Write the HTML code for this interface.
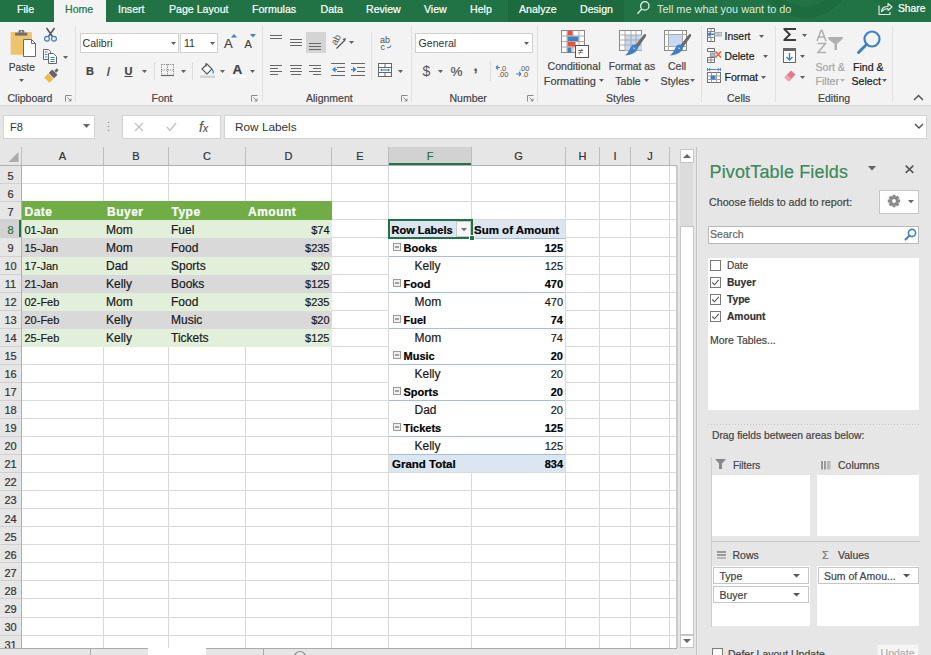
<!DOCTYPE html><html><head><meta charset="utf-8"><style>
html,body{margin:0;padding:0;}
body{width:931px;height:655px;overflow:hidden;position:relative;background:#e6e6e6;font-family:"Liberation Sans", sans-serif;}
.t{position:absolute;white-space:nowrap;-webkit-text-stroke:0.2px currentColor;}
.r{position:absolute;box-sizing:border-box;}
svg.r{overflow:visible;}
</style></head><body>
<div class="r" style="left:0px;top:0px;width:931px;height:22px;background:#217346;"></div>
<div class="r" style="left:508px;top:0px;width:116px;height:22px;background:#1c6a3e;"></div>
<svg class="r" style="left:700px;top:0px;" width="231" height="22" viewBox="0 0 231 22"><circle cx="105" cy="-30" r="42" fill="none" stroke="#1b663b" stroke-width="12" opacity="0.55"/><circle cx="200" cy="-40" r="45" fill="none" stroke="#1b663b" stroke-width="6" opacity="0.4"/></svg>
<div class="r" style="left:54px;top:0px;width:52px;height:23px;background:#f3f3f3;"></div>
<div class="t" style="left:17px;top:4.03px;font-size:10.6px;line-height:10.6px;color:#ffffff;font-weight:normal;">File</div>
<div class="t" style="left:65px;top:4.03px;font-size:10.6px;line-height:10.6px;color:#217346;font-weight:normal;">Home</div>
<div class="t" style="left:118px;top:4.03px;font-size:10.6px;line-height:10.6px;color:#ffffff;font-weight:normal;">Insert</div>
<div class="t" style="left:169px;top:4.03px;font-size:10.6px;line-height:10.6px;color:#ffffff;font-weight:normal;">Page Layout</div>
<div class="t" style="left:252px;top:4.03px;font-size:10.6px;line-height:10.6px;color:#ffffff;font-weight:normal;">Formulas</div>
<div class="t" style="left:320.5px;top:4.03px;font-size:10.6px;line-height:10.6px;color:#ffffff;font-weight:normal;">Data</div>
<div class="t" style="left:366px;top:4.03px;font-size:10.6px;line-height:10.6px;color:#ffffff;font-weight:normal;">Review</div>
<div class="t" style="left:424px;top:4.03px;font-size:10.6px;line-height:10.6px;color:#ffffff;font-weight:normal;">View</div>
<div class="t" style="left:470px;top:4.03px;font-size:10.6px;line-height:10.6px;color:#ffffff;font-weight:normal;">Help</div>
<div class="t" style="left:519px;top:4.03px;font-size:10.6px;line-height:10.6px;color:#ffffff;font-weight:normal;">Analyze</div>
<div class="t" style="left:580px;top:4.03px;font-size:10.6px;line-height:10.6px;color:#ffffff;font-weight:normal;">Design</div>
<div class="t" style="left:657px;top:3.77px;font-size:10.9px;line-height:10.9px;color:#dbe9df;font-weight:normal;-webkit-text-stroke:0;">Tell me what you want to do</div>
<div class="t" style="left:898px;top:4.28px;font-size:10.3px;line-height:10.3px;color:#ffffff;font-weight:normal;">Share</div>
<svg class="r" style="left:636px;top:0px;" width="16" height="16" viewBox="0 0 16 16"><circle cx="8.8" cy="5.9" r="4.2" fill="none" stroke="#e8f0ea" stroke-width="1.3"/><line x1="5.8" y1="8.9" x2="1.5" y2="13.8" stroke="#e8f0ea" stroke-width="1.4"/></svg>
<svg class="r" style="left:877.5px;top:2px;" width="16" height="15" viewBox="0 0 16 15"><path d="M1 3.5 V12.5 H12 V10" fill="none" stroke="#e8f0ea" stroke-width="1.1"/><path d="M3.5 9.5 C3.5 5.5 7 4.5 10 4.5 V1.5 L14 5 L10 8.5 V6.5 C7 6.5 5.5 7.5 3.5 9.5Z" fill="none" stroke="#e8f0ea" stroke-width="1.1" stroke-linejoin="round"/></svg>
<div class="r" style="left:0px;top:22px;width:931px;height:83px;background:#f3f3f3;"></div>
<div class="r" style="left:0px;top:105px;width:931px;height:1px;background:#d8d8d8;"></div>
<div class="r" style="left:75px;top:26px;width:1px;height:76px;background:#e1e1e1;"></div>
<div class="r" style="left:262px;top:26px;width:1px;height:76px;background:#e1e1e1;"></div>
<div class="r" style="left:411px;top:26px;width:1px;height:76px;background:#e1e1e1;"></div>
<div class="r" style="left:537px;top:26px;width:1px;height:76px;background:#e1e1e1;"></div>
<div class="r" style="left:701px;top:26px;width:1px;height:76px;background:#e1e1e1;"></div>
<div class="r" style="left:775px;top:26px;width:1px;height:76px;background:#e1e1e1;"></div>
<div class="r" style="left:892px;top:26px;width:1px;height:76px;background:#e1e1e1;"></div>
<div class="t" style="left:7.5px;top:93.11px;font-size:10.5px;line-height:10.5px;color:#444444;font-weight:normal;">Clipboard</div>
<div class="t" style="left:12px;width:300px;text-align:center;top:93.11px;font-size:10.5px;line-height:10.5px;color:#444444;font-weight:normal;">Font</div>
<div class="t" style="left:306px;top:93.11px;font-size:10.5px;line-height:10.5px;color:#444444;font-weight:normal;">Alignment</div>
<div class="t" style="left:449.5px;top:93.11px;font-size:10.5px;line-height:10.5px;color:#444444;font-weight:normal;">Number</div>
<div class="t" style="left:606px;top:93.11px;font-size:10.5px;line-height:10.5px;color:#444444;font-weight:normal;">Styles</div>
<div class="t" style="left:727px;top:93.11px;font-size:10.5px;line-height:10.5px;color:#444444;font-weight:normal;">Cells</div>
<div class="t" style="left:818px;top:93.11px;font-size:10.5px;line-height:10.5px;color:#444444;font-weight:normal;">Editing</div>
<svg class="r" style="left:65px;top:95px;" width="7" height="7" viewBox="0 0 7 7"><path d="M0.5 6.5 V0.5 H6.5" fill="none" stroke="#8a8a8a" stroke-width="1"/><path d="M2.5 2.5 L6 6 M6 3.5 V6 H3.5" fill="none" stroke="#8a8a8a" stroke-width="1"/></svg>
<svg class="r" style="left:251px;top:95px;" width="7" height="7" viewBox="0 0 7 7"><path d="M0.5 6.5 V0.5 H6.5" fill="none" stroke="#8a8a8a" stroke-width="1"/><path d="M2.5 2.5 L6 6 M6 3.5 V6 H3.5" fill="none" stroke="#8a8a8a" stroke-width="1"/></svg>
<svg class="r" style="left:401px;top:95px;" width="7" height="7" viewBox="0 0 7 7"><path d="M0.5 6.5 V0.5 H6.5" fill="none" stroke="#8a8a8a" stroke-width="1"/><path d="M2.5 2.5 L6 6 M6 3.5 V6 H3.5" fill="none" stroke="#8a8a8a" stroke-width="1"/></svg>
<svg class="r" style="left:527px;top:95px;" width="7" height="7" viewBox="0 0 7 7"><path d="M0.5 6.5 V0.5 H6.5" fill="none" stroke="#8a8a8a" stroke-width="1"/><path d="M2.5 2.5 L6 6 M6 3.5 V6 H3.5" fill="none" stroke="#8a8a8a" stroke-width="1"/></svg>
<svg class="r" style="left:913px;top:94px;" width="11" height="7" viewBox="0 0 11 7"><path d="M1 6 L5.5 1.5 L10 6" fill="none" stroke="#555" stroke-width="1.5"/></svg>
<svg class="r" style="left:9px;top:29px;" width="28" height="29" viewBox="0 0 28 29">
<rect x="1.6" y="3" width="21.3" height="22.7" rx="1.2" fill="#efc26c"/>
<rect x="6.1" y="3.7" width="12.2" height="2.9" fill="#6f6f6f"/>
<path d="M9.6 3.8 V2.2 Q9.6 1 10.8 1 H14 Q15.2 1 15.2 2.2 V3.8Z" fill="#6f6f6f"/>
<circle cx="12.4" cy="2.6" r="0.8" fill="#efefef"/>
<path d="M14.5 10.5 H22.5 L26.5 14.5 V27.5 H14.5Z" fill="#fff" stroke="#6a6a6a" stroke-width="1"/>
<path d="M22.5 10.5 V14.5 H26.5" fill="none" stroke="#6a6a6a" stroke-width="1"/></svg>
<div class="t" style="left:8.8px;top:62.67px;font-size:10.2px;line-height:10.2px;color:#444444;font-weight:normal;">Paste</div>
<svg class="r" style="left:18.5px;top:79.0px;" width="5" height="3" viewBox="0 0 5 3"><path d="M0 0 H5 L2.5 3Z" fill="#606060"/></svg>
<svg class="r" style="left:44px;top:27px;" width="13" height="15" viewBox="0 0 13 15"><path d="M2.5 1 L8.5 9.5 M10.5 1 L4.5 9.5" stroke="#555" stroke-width="1.5" fill="none"/><circle cx="3" cy="11.7" r="2.4" fill="none" stroke="#3f7fc4" stroke-width="1.2"/><circle cx="10" cy="11.7" r="2.4" fill="none" stroke="#3f7fc4" stroke-width="1.2"/></svg>
<svg class="r" style="left:43px;top:49px;" width="15" height="15" viewBox="0 0 15 15"><path d="M0.5 0.5 H5.5 L7.5 2.5 V10.5 H0.5Z" fill="#fff" stroke="#666" stroke-width="1"/><path d="M5.5 4.5 H10.5 L13.5 7.5 V14.5 H5.5Z" fill="#fff" stroke="#666" stroke-width="1"/><path d="M2 3 H4.5 M2 5.5 H4.5 M2 8 H4.5 M7.5 8.5 H11.5 M7.5 10.5 H11.5 M7.5 12.5 H11.5" stroke="#3f7fc4" stroke-width="1"/></svg>
<svg class="r" style="left:62.5px;top:55.5px;" width="5" height="3" viewBox="0 0 5 3"><path d="M0 0 H5 L2.5 3Z" fill="#606060"/></svg>
<svg class="r" style="left:41.5px;top:67px;" width="18" height="18" viewBox="0 0 18 18"><g transform="rotate(45 9 9)"><rect x="7.6" y="-0.5" width="2.8" height="3.5" rx="0.8" fill="#666"/><rect x="5.2" y="3.6" width="7.6" height="5" rx="0.8" fill="#666"/><path d="M5.2 9.2 H12.8 V14.5 L11.5 15.5 L10.3 14.5 L9 15.5 L7.7 14.5 L6.5 15.5 L5.2 14.5Z" fill="#f0b94e"/></g></svg>
<div class="r" style="left:80px;top:33px;width:99px;height:20px;background:#fff;border:1px solid #d0d0d0"></div>
<div class="r" style="left:180px;top:33px;width:38px;height:20px;background:#fff;border:1px solid #d0d0d0"></div>
<div class="t" style="left:82.5px;top:38.03px;font-size:10.6px;line-height:10.6px;color:#333;font-weight:normal;-webkit-text-stroke:0;">Calibri</div>
<div class="t" style="left:184px;top:38.03px;font-size:10.6px;line-height:10.6px;color:#333;font-weight:normal;-webkit-text-stroke:0;">11</div>
<svg class="r" style="left:170.5px;top:42.0px;" width="5" height="3" viewBox="0 0 5 3"><path d="M0 0 H5 L2.5 3Z" fill="#606060"/></svg>
<svg class="r" style="left:209.5px;top:42.0px;" width="5" height="3" viewBox="0 0 5 3"><path d="M0 0 H5 L2.5 3Z" fill="#606060"/></svg>
<div class="t" style="left:224px;top:37.00px;font-size:13px;line-height:13px;color:#444;font-weight:normal;">A</div>
<svg class="r" style="left:231px;top:34px;" width="6" height="4" viewBox="0 0 6 4"><path d="M0 3.5 L3 0 L6 3.5Z" fill="#3f7fc4"/></svg>
<div class="t" style="left:244.5px;top:38.69px;font-size:11px;line-height:11px;color:#444;font-weight:normal;">A</div>
<svg class="r" style="left:250px;top:34px;" width="6" height="4" viewBox="0 0 6 4"><path d="M0 0 H6 L3 3.5Z" fill="#3f7fc4"/></svg>
<div class="t" style="left:86px;top:65.69px;font-size:11px;line-height:11px;color:#444;font-weight:bold;">B</div>
<div class="t" style="left:106.5px;top:64.50px;font-size:13px;line-height:13px;color:#444;font-weight:normal;font-family:"Liberation Serif",serif;"><i>I</i></div>
<div class="t" style="left:124.5px;top:65.69px;font-size:11px;line-height:11px;color:#444;font-weight:bold;text-decoration:underline;">U</div>
<svg class="r" style="left:141.5px;top:69.5px;" width="5" height="3" viewBox="0 0 5 3"><path d="M0 0 H5 L2.5 3Z" fill="#606060"/></svg>
<div class="r" style="left:154px;top:62px;width:1px;height:18px;background:#dcdcdc;"></div>
<svg class="r" style="left:161px;top:64px;" width="13" height="13" viewBox="0 0 13 13"><path d="M0.5 0.5 H12.5 M0.5 6 H12.5 M0.5 0.5 V11 M6.5 0.5 V11 M12.5 0.5 V11" fill="none" stroke="#777" stroke-dasharray="1 1.2"/><path d="M0 11.5 H13" stroke="#666" stroke-width="1.2"/></svg>
<svg class="r" style="left:180.5px;top:69.5px;" width="5" height="3" viewBox="0 0 5 3"><path d="M0 0 H5 L2.5 3Z" fill="#606060"/></svg>
<div class="r" style="left:192px;top:62px;width:1px;height:18px;background:#dcdcdc;"></div>
<svg class="r" style="left:200px;top:62px;" width="16" height="16" viewBox="0 0 16 16"><path d="M2 7 L7 2 L12 7 L7 12Z" fill="#fff" stroke="#555" stroke-width="1.1"/><path d="M6 1 V5" stroke="#555" stroke-width="1"/><path d="M12 7 Q14.5 10 13 11.5" fill="#3f7fc4" stroke="#3f7fc4"/><rect x="0" y="13.5" width="15" height="2.5" fill="#d4d4d4"/></svg>
<svg class="r" style="left:219.5px;top:69.5px;" width="5" height="3" viewBox="0 0 5 3"><path d="M0 0 H5 L2.5 3Z" fill="#606060"/></svg>
<div class="t" style="left:232.5px;top:63.07px;font-size:13.5px;line-height:13.5px;color:#444;font-weight:bold;">A</div>
<div class="r" style="left:230px;top:75px;width:16px;height:3px;background:#fafafa;"></div>
<svg class="r" style="left:249.5px;top:69.5px;" width="5" height="3" viewBox="0 0 5 3"><path d="M0 0 H5 L2.5 3Z" fill="#606060"/></svg>
<svg class="r" style="left:270px;top:34.5px;" width="14" height="7" viewBox="0 0 14 7"><rect x="0" y="0" width="12" height="1" fill="#666"/><rect x="0" y="3" width="12" height="1" fill="#666"/></svg>
<svg class="r" style="left:290px;top:38.5px;" width="14" height="10" viewBox="0 0 14 10"><rect x="0" y="0" width="12" height="1" fill="#666"/><rect x="0" y="3" width="12" height="1" fill="#666"/><rect x="0" y="6" width="12" height="1" fill="#666"/></svg>
<div class="r" style="left:306px;top:32px;width:20px;height:21px;background:#d4d4d4;"></div>
<svg class="r" style="left:309px;top:43px;" width="14" height="10" viewBox="0 0 14 10"><rect x="0" y="0" width="12" height="1" fill="#666"/><rect x="0" y="3" width="12" height="1" fill="#666"/><rect x="0" y="6" width="12" height="1" fill="#666"/></svg>
<svg class="r" style="left:331px;top:34px;" width="16" height="16" viewBox="0 0 16 16"><text x="0" y="9" font-size="9.5" font-family="Liberation Sans" fill="#555" transform="rotate(-62 5 6)">ab</text><path d="M5.5 14.5 L13.5 6.5" stroke="#555" stroke-width="1.2"/><path d="M11.5 5 L15 4 L14 7.5Z" fill="#555"/></svg>
<svg class="r" style="left:348.5px;top:40.5px;" width="5" height="3" viewBox="0 0 5 3"><path d="M0 0 H5 L2.5 3Z" fill="#606060"/></svg>
<div class="r" style="left:371px;top:32px;width:1px;height:48px;background:#dcdcdc;"></div>
<svg class="r" style="left:380px;top:35px;" width="14" height="15" viewBox="0 0 14 15"><text x="0" y="7.5" font-size="9" font-family="Liberation Sans" fill="#505050">ab</text><text x="0.5" y="14.5" font-size="9" font-family="Liberation Sans" fill="#505050">c</text><path d="M7 12.5 Q9.5 13.5 11 10.5" fill="none" stroke="#3f7fc4" stroke-width="1.2"/></svg>
<svg class="r" style="left:270px;top:65px;" width="14" height="13" viewBox="0 0 14 13"><rect x="0" y="0" width="12" height="1" fill="#666"/><rect x="0" y="3" width="8" height="1" fill="#666"/><rect x="0" y="6" width="12" height="1" fill="#666"/><rect x="0" y="9" width="8" height="1" fill="#666"/></svg>
<svg class="r" style="left:290px;top:65px;" width="14" height="13" viewBox="0 0 14 13"><rect x="0" y="0" width="12" height="1" fill="#666"/><rect x="1" y="3" width="10" height="1" fill="#666"/><rect x="0" y="6" width="12" height="1" fill="#666"/><rect x="1" y="9" width="10" height="1" fill="#666"/></svg>
<svg class="r" style="left:309px;top:65px;" width="14" height="13" viewBox="0 0 14 13"><rect x="0" y="0" width="12" height="1" fill="#666"/><rect x="4" y="3" width="8" height="1" fill="#666"/><rect x="0" y="6" width="12" height="1" fill="#666"/><rect x="4" y="9" width="8" height="1" fill="#666"/></svg>
<svg class="r" style="left:331px;top:63px;" width="15" height="13" viewBox="0 0 15 13"><rect x="0" y="0" width="14" height="1" fill="#666"/><rect x="6" y="4" width="8" height="1" fill="#666"/><rect x="6" y="8" width="8" height="1" fill="#666"/><rect x="0" y="12" width="14" height="1" fill="#666"/><path d="M1 6.5 L4.5 3.5 V9.5Z" fill="#3f7fc4"/><rect x="3" y="6" width="3" height="1.2" fill="#3f7fc4"/></svg>
<svg class="r" style="left:351px;top:63px;" width="15" height="13" viewBox="0 0 15 13"><rect x="0" y="0" width="14" height="1" fill="#666"/><rect x="6" y="4" width="8" height="1" fill="#666"/><rect x="6" y="8" width="8" height="1" fill="#666"/><rect x="0" y="12" width="14" height="1" fill="#666"/><path d="M5.5 6.5 L2 3.5 V9.5Z" fill="#3f7fc4"/><rect x="0" y="6" width="3" height="1.2" fill="#3f7fc4"/></svg>
<svg class="r" style="left:378px;top:63px;" width="15" height="14" viewBox="0 0 15 14"><rect x="0.5" y="0.5" width="13" height="13" fill="#fff" stroke="#666"/><path d="M0.5 4.5 H13.5 M0.5 9.5 H13.5 M7 0.5 V4.5 M7 9.5 V13.5" stroke="#666"/><path d="M3 7 H11" stroke="#3f7fc4" stroke-width="1.2"/><path d="M2 7 L4 5.5 V8.5Z M12 7 L10 5.5 V8.5Z" fill="#3f7fc4"/></svg>
<svg class="r" style="left:398.0px;top:69.5px;" width="5" height="3" viewBox="0 0 5 3"><path d="M0 0 H5 L2.5 3Z" fill="#606060"/></svg>
<div class="r" style="left:415px;top:33px;width:118px;height:20px;background:#fff;border:1px solid #d0d0d0"></div>
<div class="t" style="left:418.5px;top:38.03px;font-size:10.6px;line-height:10.6px;color:#333;font-weight:normal;-webkit-text-stroke:0;">General</div>
<svg class="r" style="left:524.0px;top:42.0px;" width="5" height="3" viewBox="0 0 5 3"><path d="M0 0 H5 L2.5 3Z" fill="#606060"/></svg>
<div class="t" style="left:422.5px;top:63.65px;font-size:14px;line-height:14px;color:#555;font-weight:normal;-webkit-text-stroke:0;">$</div>
<svg class="r" style="left:438.0px;top:69.5px;" width="5" height="3" viewBox="0 0 5 3"><path d="M0 0 H5 L2.5 3Z" fill="#606060"/></svg>
<div class="t" style="left:450.5px;top:64.57px;font-size:13.5px;line-height:13.5px;color:#555;font-weight:normal;">%</div>
<div class="t" style="left:473.5px;top:57.80px;font-size:15px;line-height:15px;color:#555;font-weight:normal;"><b>,</b></div>
<div class="r" style="left:490px;top:61px;width:1px;height:20px;background:#dcdcdc;"></div>
<svg class="r" style="left:495px;top:64px;" width="16" height="14" viewBox="0 0 16 14"><text x="5" y="6.5" font-size="7.5" font-family="Liberation Sans" fill="#555">.0</text><text x="3" y="13" font-size="7.5" font-family="Liberation Sans" fill="#555">.00</text><path d="M1 3.5 H5 M1 3.5 L3 1.5 M1 3.5 L3 5.5" stroke="#3f7fc4" stroke-width="1.1" fill="none"/></svg>
<svg class="r" style="left:515px;top:64px;" width="16" height="14" viewBox="0 0 16 14"><text x="4" y="6.5" font-size="7.5" font-family="Liberation Sans" fill="#555">.00</text><text x="7" y="13" font-size="7.5" font-family="Liberation Sans" fill="#555">.0</text><path d="M1 10 H6 M6 10 L4 8 M6 10 L4 12" stroke="#3f7fc4" stroke-width="1.1" fill="none"/></svg>
<svg class="r" style="left:561px;top:30px;" width="29" height="28" viewBox="0 0 29 28">
<rect x="0.5" y="0.5" width="23" height="22" fill="#fff" stroke="#888"/>
<path d="M0.5 6 H23.5 M0.5 11.5 H23.5 M0.5 17 H23.5 M6 0.5 V22.5 M12 0.5 V22.5 M18 0.5 V22.5" stroke="#aaa"/>
<rect x="6.5" y="1" width="5" height="4.5" fill="#e5533d"/>
<rect x="6.5" y="6.5" width="11" height="4.5" fill="#3f7fc4"/>
<rect x="6.5" y="12" width="8" height="4.5" fill="#e5533d"/>
<rect x="6.5" y="17.5" width="4" height="5" fill="#3f7fc4"/>
<rect x="14.5" y="15.5" width="13" height="12" fill="#fff" stroke="#555"/>
<text x="17" y="25" font-size="10" font-family="Liberation Sans" fill="#444">≠</text></svg>
<div class="t" style="left:424px;width:300px;text-align:center;top:61.03px;font-size:10.6px;line-height:10.6px;color:#444444;font-weight:normal;">Conditional</div>
<div class="t" style="left:419.79999999999995px;width:300px;text-align:center;top:75.77px;font-size:10.9px;line-height:10.9px;color:#444444;font-weight:normal;">Formatting</div>
<svg class="r" style="left:598.5px;top:79.0px;" width="5" height="3" viewBox="0 0 5 3"><path d="M0 0 H5 L2.5 3Z" fill="#606060"/></svg>
<svg class="r" style="left:619px;top:30px;" width="28" height="27" viewBox="0 0 28 27">
<rect x="0.5" y="0.5" width="22" height="20" fill="#fff" stroke="#888"/>
<rect x="6" y="5" width="17" height="15.5" fill="#c5d9f1"/>
<path d="M0.5 5 H22.5 M0.5 10 H22.5 M0.5 15 H22.5 M6 0.5 V20.5 M12 0.5 V20.5 M17 0.5 V20.5" stroke="#aaa"/>
<path d="M16.5 15 L24.5 5 Q26 3.5 27 4.5 Q27.5 5.5 26.5 7 L19 17.5Z" fill="#6a6a6a"/>
<path d="M13 15.5 Q16 13 19.5 16.5 Q18.5 21 14 23.5 Q10 25.5 6 25.5 Q9 23 10.5 19.5 Q11.5 17 13 15.5Z" fill="#3f7fc4"/><path d="M14 18 Q15.5 17.5 16 19" fill="none" stroke="#cfe0f3" stroke-width="1"/></svg>
<div class="t" style="left:482px;width:300px;text-align:center;top:62.28px;font-size:10.3px;line-height:10.3px;color:#444444;font-weight:normal;">Format as</div>
<div class="t" style="left:478px;width:300px;text-align:center;top:76.03px;font-size:10.6px;line-height:10.6px;color:#444444;font-weight:normal;">Table</div>
<svg class="r" style="left:643.5px;top:79.0px;" width="5" height="3" viewBox="0 0 5 3"><path d="M0 0 H5 L2.5 3Z" fill="#606060"/></svg>
<svg class="r" style="left:664px;top:30px;" width="28" height="27" viewBox="0 0 28 27">
<rect x="0.5" y="0.5" width="22" height="20" fill="#fff" stroke="#888"/>
<rect x="4.5" y="4.5" width="14" height="12" fill="#c5d9f1"/>
<path d="M0.5 4.5 H22.5 M0.5 16.5 H22.5 M4.5 0.5 V20.5 M18.5 0.5 V20.5" stroke="#aaa"/>
<path d="M16.5 15 L24.5 5 Q26 3.5 27 4.5 Q27.5 5.5 26.5 7 L19 17.5Z" fill="#6a6a6a"/>
<path d="M13 15.5 Q16 13 19.5 16.5 Q18.5 21 14 23.5 Q10 25.5 6 25.5 Q9 23 10.5 19.5 Q11.5 17 13 15.5Z" fill="#3f7fc4"/><path d="M14 18 Q15.5 17.5 16 19" fill="none" stroke="#cfe0f3" stroke-width="1"/></svg>
<div class="t" style="left:527px;width:300px;text-align:center;top:61.03px;font-size:10.6px;line-height:10.6px;color:#444444;font-weight:normal;">Cell</div>
<div class="t" style="left:525px;width:300px;text-align:center;top:76.03px;font-size:10.6px;line-height:10.6px;color:#444444;font-weight:normal;">Styles</div>
<svg class="r" style="left:689.5px;top:79.0px;" width="5" height="3" viewBox="0 0 5 3"><path d="M0 0 H5 L2.5 3Z" fill="#606060"/></svg>
<svg class="r" style="left:707px;top:28px;" width="15" height="15" viewBox="0 0 15 15"><path d="M0.5 0.5 H7.5 V13.5 H0.5Z" fill="#fff" stroke="#707070"/><path d="M0.5 3.5 H7.5 M0.5 9.5 H7.5 M4 0.5 V3.5 M4 9.5 V13.5" stroke="#8a8a8a"/><rect x="7.5" y="4.5" width="7" height="3.5" fill="#c8d3df" stroke="#9aa5b0" stroke-width="0.8"/><path d="M11 4.5 V8" stroke="#9aa5b0" stroke-width="0.8"/><path d="M2 6.3 H7.5 M1.2 6.3 L3.8 4.2 M1.2 6.3 L3.8 8.4" stroke="#3f7fc4" stroke-width="1.4" fill="none"/></svg>
<div class="t" style="left:724.5px;top:32.20px;font-size:10.4px;line-height:10.4px;color:#1a1a1a;font-weight:normal;">Insert</div>
<svg class="r" style="left:758.5px;top:34.5px;" width="5" height="3" viewBox="0 0 5 3"><path d="M0 0 H5 L2.5 3Z" fill="#606060"/></svg>
<svg class="r" style="left:707px;top:48px;" width="15" height="15" viewBox="0 0 15 15"><path d="M0.5 0.5 H7.5 V3.5 H0.5Z M0.5 9.5 H7.5 V14.5 H0.5Z" fill="#fff" stroke="#707070"/><path d="M4 9.5 V14.5 M0.5 12 H7.5" stroke="#8a8a8a"/><rect x="3.5" y="5" width="4.5" height="3.5" fill="#a9bfd6" stroke="#8a8a8a" stroke-width="0.8"/><path d="M8.5 3.5 L14 9.5 M14 3.5 L8.5 9.5" stroke="#e5613d" stroke-width="1.5"/></svg>
<div class="t" style="left:724.5px;top:51.70px;font-size:10.4px;line-height:10.4px;color:#1a1a1a;font-weight:normal;">Delete</div>
<svg class="r" style="left:762.5px;top:55.0px;" width="5" height="3" viewBox="0 0 5 3"><path d="M0 0 H5 L2.5 3Z" fill="#606060"/></svg>
<svg class="r" style="left:707px;top:68px;" width="15" height="16" viewBox="0 0 15 16"><path d="M1.5 1.5 H12.5 M1.5 1.5 L3.3 0.2 M1.5 1.5 L3.3 2.8 M12.5 1.5 L10.7 0.2 M12.5 1.5 L10.7 2.8 M0.5 0 V3 M13.5 0 V3" stroke="#3f7fc4" stroke-width="0.9" fill="none"/><rect x="0.5" y="4.5" width="13" height="10" fill="#fff" stroke="#707070"/><path d="M0.5 8 H13.5 M0.5 11.5 H13.5 M4.5 4.5 V14.5 M9.5 4.5 V14.5" stroke="#a0a0a0"/><rect x="3.5" y="7.5" width="5" height="4" fill="#3f7fc4"/></svg>
<div class="t" style="left:724.5px;top:72.03px;font-size:10.6px;line-height:10.6px;color:#1a1a1a;font-weight:normal;">Format</div>
<svg class="r" style="left:761.0px;top:75.5px;" width="5" height="3" viewBox="0 0 5 3"><path d="M0 0 H5 L2.5 3Z" fill="#606060"/></svg>
<svg class="r" style="left:783px;top:28px;" width="14" height="14" viewBox="0 0 14 14"><path d="M0.5 0 H13 V2 H3.6 L8.2 6.5 L3.6 11 H13 V13 H0.5 V11.3 L5.4 6.5 L0.5 1.7Z" fill="#3c3c3c"/></svg>
<svg class="r" style="left:802.0px;top:34.0px;" width="5" height="3" viewBox="0 0 5 3"><path d="M0 0 H5 L2.5 3Z" fill="#606060"/></svg>
<svg class="r" style="left:783px;top:48px;" width="13" height="15" viewBox="0 0 13 15"><rect x="0.5" y="0.5" width="12" height="14" fill="#fff" stroke="#666"/><rect x="0.5" y="0.5" width="12" height="2.5" fill="#666"/><path d="M6.5 5 V12 M3.5 9 L6.5 12 L9.5 9" stroke="#3f7fc4" stroke-width="1.4" fill="none"/></svg>
<svg class="r" style="left:800.0px;top:55.0px;" width="5" height="3" viewBox="0 0 5 3"><path d="M0 0 H5 L2.5 3Z" fill="#606060"/></svg>
<svg class="r" style="left:783px;top:70px;" width="13" height="12" viewBox="0 0 13 12"><path d="M8 0.5 L12.5 4.5 L6 11.5 L1.5 7.5Z" fill="#e8768c"/><path d="M1.5 7.5 L4 4.8 L8.5 8.8 L6 11.5Z" fill="#f3a0b0"/></svg>
<svg class="r" style="left:800.0px;top:75.5px;" width="5" height="3" viewBox="0 0 5 3"><path d="M0 0 H5 L2.5 3Z" fill="#606060"/></svg>
<svg class="r" style="left:816px;top:30px;" width="28" height="25" viewBox="0 0 28 25"><path d="M1 11 L5 0.5 H6 L10 11 M2.8 7 H8.2" fill="none" stroke="#b0b0b0" stroke-width="1.6"/><path d="M1.5 13.5 H9.5 L2 22.5 H10" fill="none" stroke="#b0b0b0" stroke-width="1.6"/><path d="M12 7 H27 Q27 9 25 10.5 L21 14 V20 H18.5 V14 L14 10.5 Q12 9 12 7Z" fill="#b0b0b0"/></svg>
<div class="t" style="left:815.5px;top:61.53px;font-size:10.6px;line-height:10.6px;color:#a6a6a6;font-weight:normal;">Sort &amp;</div>
<div class="t" style="left:815.5px;top:76.03px;font-size:10.6px;line-height:10.6px;color:#a6a6a6;font-weight:normal;">Filter</div>
<svg class="r" style="left:840.0px;top:79.0px;" width="5" height="3" viewBox="0 0 5 3"><path d="M0 0 H5 L2.5 3Z" fill="#b4b4b4"/></svg>
<svg class="r" style="left:856px;top:29px;" width="26" height="26" viewBox="0 0 26 26"><circle cx="16" cy="10" r="7.5" fill="none" stroke="#3f7fc4" stroke-width="2.2"/><path d="M10.5 15.5 L2.5 23.5" stroke="#3f7fc4" stroke-width="3" stroke-linecap="round"/></svg>
<div class="t" style="left:853px;top:61.53px;font-size:10.6px;line-height:10.6px;color:#1a1a1a;font-weight:normal;">Find &amp;</div>
<div class="t" style="left:851.5px;top:76.03px;font-size:10.6px;line-height:10.6px;color:#1a1a1a;font-weight:normal;">Select</div>
<svg class="r" style="left:881.5px;top:79.0px;" width="5" height="3" viewBox="0 0 5 3"><path d="M0 0 H5 L2.5 3Z" fill="#606060"/></svg>
<div class="r" style="left:3px;top:115px;width:92px;height:24px;background:#fff;border:1px solid #d4d4d4"></div>
<div class="t" style="left:10px;top:122.19px;font-size:11px;line-height:11px;color:#333;font-weight:normal;-webkit-text-stroke:0;">F8</div>
<svg class="r" style="left:82.5px;top:124px;" width="7" height="4" viewBox="0 0 7 4"><path d="M0 0 H7 L3.5 4Z" fill="#666"/></svg>
<svg class="r" style="left:107px;top:121px;" width="3" height="12" viewBox="0 0 3 12"><circle cx="1.5" cy="1.5" r="0.8" fill="#999"/><circle cx="1.5" cy="5.5" r="0.8" fill="#999"/><circle cx="1.5" cy="9.5" r="0.8" fill="#999"/></svg>
<div class="r" style="left:122px;top:115px;width:99px;height:24px;background:#fff;border:1px solid #d4d4d4"></div>
<svg class="r" style="left:134px;top:122px;" width="10" height="10" viewBox="0 0 10 10"><path d="M1 1 L9 9 M9 1 L1 9" stroke="#c0c0c0" stroke-width="1.2"/></svg>
<svg class="r" style="left:166px;top:122px;" width="11" height="10" viewBox="0 0 11 10"><path d="M1 5 L4 8.5 L10 1" stroke="#c0c0c0" stroke-width="1.3" fill="none"/></svg>
<div class="t" style="left:199px;top:119.65px;font-size:14px;line-height:14px;color:#5a5a5a;font-weight:normal;font-family:"Liberation Serif",serif;"><i>f</i><span style="font-size:10px;"><i>x</i></span></div>
<div class="r" style="left:224px;top:115px;width:703px;height:24px;background:#fff;border:1px solid #d4d4d4"></div>
<div class="t" style="left:235px;top:122.01px;font-size:11.8px;line-height:11.8px;color:#333;font-weight:normal;-webkit-text-stroke:0;">Row Labels</div>
<svg class="r" style="left:914px;top:123px;" width="10" height="6" viewBox="0 0 10 6"><path d="M1 1 L5 5 L9 1" stroke="#555" stroke-width="1.5" fill="none"/></svg>
<div class="r" style="left:22px;top:166px;width:655px;height:482px;background:#ffffff;"></div>
<div class="r" style="left:0px;top:147px;width:677px;height:18px;background:#e6e6e6;"></div>
<div class="r" style="left:389px;top:147px;width:82px;height:18px;background:#d2d2d2;"></div>
<div class="r" style="left:389px;top:163px;width:82px;height:2px;background:#217346;"></div>
<div class="r" style="left:0px;top:165px;width:677px;height:1px;background:#b0b0b0;"></div>
<svg class="r" style="left:8px;top:152px;" width="11" height="10" viewBox="0 0 11 10"><path d="M10.5 0 V10 H0.5Z" fill="#acacac"/></svg>
<div class="r" style="left:21px;top:147px;width:1px;height:18px;background:#bdbdbd;"></div>
<div class="r" style="left:103px;top:147px;width:1px;height:18px;background:#bdbdbd;"></div>
<div class="r" style="left:168px;top:147px;width:1px;height:18px;background:#bdbdbd;"></div>
<div class="r" style="left:245px;top:147px;width:1px;height:18px;background:#bdbdbd;"></div>
<div class="r" style="left:331px;top:147px;width:1px;height:18px;background:#bdbdbd;"></div>
<div class="r" style="left:388px;top:147px;width:1px;height:18px;background:#bdbdbd;"></div>
<div class="r" style="left:471px;top:147px;width:1px;height:18px;background:#bdbdbd;"></div>
<div class="r" style="left:565px;top:147px;width:1px;height:18px;background:#bdbdbd;"></div>
<div class="r" style="left:599px;top:147px;width:1px;height:18px;background:#bdbdbd;"></div>
<div class="r" style="left:630px;top:147px;width:1px;height:18px;background:#bdbdbd;"></div>
<div class="r" style="left:669px;top:147px;width:1px;height:18px;background:#bdbdbd;"></div>
<div class="t" style="left:-87.5px;width:300px;text-align:center;top:150.69px;font-size:11px;line-height:11px;color:#333333;font-weight:normal;">A</div>
<div class="t" style="left:-14.0px;width:300px;text-align:center;top:150.69px;font-size:11px;line-height:11px;color:#333333;font-weight:normal;">B</div>
<div class="t" style="left:57.0px;width:300px;text-align:center;top:150.69px;font-size:11px;line-height:11px;color:#333333;font-weight:normal;">C</div>
<div class="t" style="left:138.5px;width:300px;text-align:center;top:150.69px;font-size:11px;line-height:11px;color:#333333;font-weight:normal;">D</div>
<div class="t" style="left:210.0px;width:300px;text-align:center;top:150.69px;font-size:11px;line-height:11px;color:#333333;font-weight:normal;">E</div>
<div class="t" style="left:280.0px;width:300px;text-align:center;top:150.69px;font-size:11px;line-height:11px;color:#217346;font-weight:normal;">F</div>
<div class="t" style="left:368.5px;width:300px;text-align:center;top:150.69px;font-size:11px;line-height:11px;color:#333333;font-weight:normal;">G</div>
<div class="t" style="left:432.5px;width:300px;text-align:center;top:150.69px;font-size:11px;line-height:11px;color:#333333;font-weight:normal;">H</div>
<div class="t" style="left:465.0px;width:300px;text-align:center;top:150.69px;font-size:11px;line-height:11px;color:#333333;font-weight:normal;">I</div>
<div class="t" style="left:500.0px;width:300px;text-align:center;top:150.69px;font-size:11px;line-height:11px;color:#333333;font-weight:normal;">J</div>
<div class="r" style="left:0px;top:166px;width:21px;height:482px;background:#e6e6e6;"></div>
<div class="r" style="left:0px;top:220px;width:21px;height:17px;background:#d2d2d2;"></div>
<div class="r" style="left:19px;top:220px;width:2px;height:17px;background:#217346;"></div>
<div class="r" style="left:21px;top:166px;width:1px;height:482px;background:#b0b0b0;"></div>
<div class="r" style="left:0px;top:183px;width:21px;height:1px;background:#d0d0d0;"></div>
<div class="r" style="left:22px;top:183px;width:655px;height:1px;background:#d9d9d9;"></div>
<div class="r" style="left:0px;top:201px;width:21px;height:1px;background:#d0d0d0;"></div>
<div class="r" style="left:22px;top:201px;width:655px;height:1px;background:#d9d9d9;"></div>
<div class="r" style="left:0px;top:219px;width:21px;height:1px;background:#d0d0d0;"></div>
<div class="r" style="left:22px;top:219px;width:655px;height:1px;background:#d9d9d9;"></div>
<div class="r" style="left:0px;top:237px;width:21px;height:1px;background:#d0d0d0;"></div>
<div class="r" style="left:22px;top:237px;width:655px;height:1px;background:#d9d9d9;"></div>
<div class="r" style="left:0px;top:256px;width:21px;height:1px;background:#d0d0d0;"></div>
<div class="r" style="left:22px;top:256px;width:655px;height:1px;background:#d9d9d9;"></div>
<div class="r" style="left:0px;top:274px;width:21px;height:1px;background:#d0d0d0;"></div>
<div class="r" style="left:22px;top:274px;width:655px;height:1px;background:#d9d9d9;"></div>
<div class="r" style="left:0px;top:292px;width:21px;height:1px;background:#d0d0d0;"></div>
<div class="r" style="left:22px;top:292px;width:655px;height:1px;background:#d9d9d9;"></div>
<div class="r" style="left:0px;top:310px;width:21px;height:1px;background:#d0d0d0;"></div>
<div class="r" style="left:22px;top:310px;width:655px;height:1px;background:#d9d9d9;"></div>
<div class="r" style="left:0px;top:328px;width:21px;height:1px;background:#d0d0d0;"></div>
<div class="r" style="left:22px;top:328px;width:655px;height:1px;background:#d9d9d9;"></div>
<div class="r" style="left:0px;top:346px;width:21px;height:1px;background:#d0d0d0;"></div>
<div class="r" style="left:22px;top:346px;width:655px;height:1px;background:#d9d9d9;"></div>
<div class="r" style="left:0px;top:364px;width:21px;height:1px;background:#d0d0d0;"></div>
<div class="r" style="left:22px;top:364px;width:655px;height:1px;background:#d9d9d9;"></div>
<div class="r" style="left:0px;top:382px;width:21px;height:1px;background:#d0d0d0;"></div>
<div class="r" style="left:22px;top:382px;width:655px;height:1px;background:#d9d9d9;"></div>
<div class="r" style="left:0px;top:400px;width:21px;height:1px;background:#d0d0d0;"></div>
<div class="r" style="left:22px;top:400px;width:655px;height:1px;background:#d9d9d9;"></div>
<div class="r" style="left:0px;top:418px;width:21px;height:1px;background:#d0d0d0;"></div>
<div class="r" style="left:22px;top:418px;width:655px;height:1px;background:#d9d9d9;"></div>
<div class="r" style="left:0px;top:436px;width:21px;height:1px;background:#d0d0d0;"></div>
<div class="r" style="left:22px;top:436px;width:655px;height:1px;background:#d9d9d9;"></div>
<div class="r" style="left:0px;top:454px;width:21px;height:1px;background:#d0d0d0;"></div>
<div class="r" style="left:22px;top:454px;width:655px;height:1px;background:#d9d9d9;"></div>
<div class="r" style="left:0px;top:472px;width:21px;height:1px;background:#d0d0d0;"></div>
<div class="r" style="left:22px;top:472px;width:655px;height:1px;background:#d9d9d9;"></div>
<div class="r" style="left:0px;top:490px;width:21px;height:1px;background:#d0d0d0;"></div>
<div class="r" style="left:22px;top:490px;width:655px;height:1px;background:#d9d9d9;"></div>
<div class="r" style="left:0px;top:508px;width:21px;height:1px;background:#d0d0d0;"></div>
<div class="r" style="left:22px;top:508px;width:655px;height:1px;background:#d9d9d9;"></div>
<div class="r" style="left:0px;top:526px;width:21px;height:1px;background:#d0d0d0;"></div>
<div class="r" style="left:22px;top:526px;width:655px;height:1px;background:#d9d9d9;"></div>
<div class="r" style="left:0px;top:544px;width:21px;height:1px;background:#d0d0d0;"></div>
<div class="r" style="left:22px;top:544px;width:655px;height:1px;background:#d9d9d9;"></div>
<div class="r" style="left:0px;top:562px;width:21px;height:1px;background:#d0d0d0;"></div>
<div class="r" style="left:22px;top:562px;width:655px;height:1px;background:#d9d9d9;"></div>
<div class="r" style="left:0px;top:580px;width:21px;height:1px;background:#d0d0d0;"></div>
<div class="r" style="left:22px;top:580px;width:655px;height:1px;background:#d9d9d9;"></div>
<div class="r" style="left:0px;top:598px;width:21px;height:1px;background:#d0d0d0;"></div>
<div class="r" style="left:22px;top:598px;width:655px;height:1px;background:#d9d9d9;"></div>
<div class="r" style="left:0px;top:617px;width:21px;height:1px;background:#d0d0d0;"></div>
<div class="r" style="left:22px;top:617px;width:655px;height:1px;background:#d9d9d9;"></div>
<div class="r" style="left:0px;top:635px;width:21px;height:1px;background:#d0d0d0;"></div>
<div class="r" style="left:22px;top:635px;width:655px;height:1px;background:#d9d9d9;"></div>
<div class="r" style="left:103px;top:166px;width:1px;height:482px;background:#d9d9d9;"></div>
<div class="r" style="left:168px;top:166px;width:1px;height:482px;background:#d9d9d9;"></div>
<div class="r" style="left:245px;top:166px;width:1px;height:482px;background:#d9d9d9;"></div>
<div class="r" style="left:331px;top:166px;width:1px;height:482px;background:#d9d9d9;"></div>
<div class="r" style="left:388px;top:166px;width:1px;height:482px;background:#d9d9d9;"></div>
<div class="r" style="left:471px;top:166px;width:1px;height:482px;background:#d9d9d9;"></div>
<div class="r" style="left:565px;top:166px;width:1px;height:482px;background:#d9d9d9;"></div>
<div class="r" style="left:599px;top:166px;width:1px;height:482px;background:#d9d9d9;"></div>
<div class="r" style="left:630px;top:166px;width:1px;height:482px;background:#d9d9d9;"></div>
<div class="r" style="left:669px;top:166px;width:1px;height:482px;background:#d9d9d9;"></div>
<div class="t" style="left:-139.5px;width:300px;text-align:center;top:171px;font-size:11px;line-height:11px;color:#333333;font-weight:normal;">5</div>
<div class="t" style="left:-139.5px;width:300px;text-align:center;top:189px;font-size:11px;line-height:11px;color:#333333;font-weight:normal;">6</div>
<div class="t" style="left:-139.5px;width:300px;text-align:center;top:207px;font-size:11px;line-height:11px;color:#333333;font-weight:normal;">7</div>
<div class="t" style="left:-139.5px;width:300px;text-align:center;top:225px;font-size:11px;line-height:11px;color:#217346;font-weight:normal;">8</div>
<div class="t" style="left:-139.5px;width:300px;text-align:center;top:243px;font-size:11px;line-height:11px;color:#333333;font-weight:normal;">9</div>
<div class="t" style="left:-139.5px;width:300px;text-align:center;top:261px;font-size:11px;line-height:11px;color:#333333;font-weight:normal;">10</div>
<div class="t" style="left:-139.5px;width:300px;text-align:center;top:279px;font-size:11px;line-height:11px;color:#333333;font-weight:normal;">11</div>
<div class="t" style="left:-139.5px;width:300px;text-align:center;top:297px;font-size:11px;line-height:11px;color:#333333;font-weight:normal;">12</div>
<div class="t" style="left:-139.5px;width:300px;text-align:center;top:315px;font-size:11px;line-height:11px;color:#333333;font-weight:normal;">13</div>
<div class="t" style="left:-139.5px;width:300px;text-align:center;top:333px;font-size:11px;line-height:11px;color:#333333;font-weight:normal;">14</div>
<div class="t" style="left:-139.5px;width:300px;text-align:center;top:351px;font-size:11px;line-height:11px;color:#333333;font-weight:normal;">15</div>
<div class="t" style="left:-139.5px;width:300px;text-align:center;top:369px;font-size:11px;line-height:11px;color:#333333;font-weight:normal;">16</div>
<div class="t" style="left:-139.5px;width:300px;text-align:center;top:387px;font-size:11px;line-height:11px;color:#333333;font-weight:normal;">17</div>
<div class="t" style="left:-139.5px;width:300px;text-align:center;top:405px;font-size:11px;line-height:11px;color:#333333;font-weight:normal;">18</div>
<div class="t" style="left:-139.5px;width:300px;text-align:center;top:423px;font-size:11px;line-height:11px;color:#333333;font-weight:normal;">19</div>
<div class="t" style="left:-139.5px;width:300px;text-align:center;top:441px;font-size:11px;line-height:11px;color:#333333;font-weight:normal;">20</div>
<div class="t" style="left:-139.5px;width:300px;text-align:center;top:459px;font-size:11px;line-height:11px;color:#333333;font-weight:normal;">21</div>
<div class="t" style="left:-139.5px;width:300px;text-align:center;top:477px;font-size:11px;line-height:11px;color:#333333;font-weight:normal;">22</div>
<div class="t" style="left:-139.5px;width:300px;text-align:center;top:495px;font-size:11px;line-height:11px;color:#333333;font-weight:normal;">23</div>
<div class="t" style="left:-139.5px;width:300px;text-align:center;top:514px;font-size:11px;line-height:11px;color:#333333;font-weight:normal;">24</div>
<div class="t" style="left:-139.5px;width:300px;text-align:center;top:532px;font-size:11px;line-height:11px;color:#333333;font-weight:normal;">25</div>
<div class="t" style="left:-139.5px;width:300px;text-align:center;top:550px;font-size:11px;line-height:11px;color:#333333;font-weight:normal;">26</div>
<div class="t" style="left:-139.5px;width:300px;text-align:center;top:568px;font-size:11px;line-height:11px;color:#333333;font-weight:normal;">27</div>
<div class="t" style="left:-139.5px;width:300px;text-align:center;top:586px;font-size:11px;line-height:11px;color:#333333;font-weight:normal;">28</div>
<div class="t" style="left:-139.5px;width:300px;text-align:center;top:604px;font-size:11px;line-height:11px;color:#333333;font-weight:normal;">29</div>
<div class="t" style="left:-139.5px;width:300px;text-align:center;top:622px;font-size:11px;line-height:11px;color:#333333;font-weight:normal;">30</div>
<div class="t" style="left:-139.5px;width:300px;text-align:center;top:640px;font-size:11px;line-height:11px;color:#333333;font-weight:normal;">31</div>
<div class="r" style="left:22px;top:201px;width:310px;height:19px;background:#70ad47;"></div>
<div class="r" style="left:22px;top:220px;width:310px;height:18px;background:#e2efda;"></div>
<div class="r" style="left:22px;top:238px;width:310px;height:19px;background:#d9d9d9;"></div>
<div class="r" style="left:22px;top:257px;width:310px;height:18px;background:#e2efda;"></div>
<div class="r" style="left:22px;top:275px;width:310px;height:18px;background:#d9d9d9;"></div>
<div class="r" style="left:22px;top:293px;width:310px;height:18px;background:#e2efda;"></div>
<div class="r" style="left:22px;top:311px;width:310px;height:18px;background:#d9d9d9;"></div>
<div class="r" style="left:22px;top:329px;width:310px;height:18px;background:#e2efda;"></div>
<div class="t" style="left:24.5px;top:206px;font-size:12px;line-height:12px;color:#fff;font-weight:bold;letter-spacing:0.5px;">Date</div>
<div class="t" style="left:107px;top:206px;font-size:12px;line-height:12px;color:#fff;font-weight:bold;letter-spacing:0.5px;">Buyer</div>
<div class="t" style="left:171.5px;top:206px;font-size:12px;line-height:12px;color:#fff;font-weight:bold;letter-spacing:0.5px;">Type</div>
<div class="t" style="left:248px;top:206px;font-size:12px;line-height:12px;color:#fff;font-weight:bold;letter-spacing:0.5px;">Amount</div>
<div class="t" style="left:24.5px;top:225px;font-size:11px;line-height:11px;color:#1a1a1a;font-weight:normal;">01-Jan</div>
<div class="t" style="left:106px;top:224px;font-size:12px;line-height:12px;color:#1a1a1a;font-weight:normal;">Mom</div>
<div class="t" style="left:171px;top:224px;font-size:12px;line-height:12px;color:#1a1a1a;font-weight:normal;">Fuel</div>
<div class="t" style="right:601.5px;top:225px;font-size:11px;line-height:11px;color:#1a1a1a;font-weight:normal;">$74</div>
<div class="t" style="left:24.5px;top:243px;font-size:11px;line-height:11px;color:#1a1a1a;font-weight:normal;">15-Jan</div>
<div class="t" style="left:106px;top:242px;font-size:12px;line-height:12px;color:#1a1a1a;font-weight:normal;">Mom</div>
<div class="t" style="left:171px;top:242px;font-size:12px;line-height:12px;color:#1a1a1a;font-weight:normal;">Food</div>
<div class="t" style="right:601.5px;top:243px;font-size:11px;line-height:11px;color:#1a1a1a;font-weight:normal;">$235</div>
<div class="t" style="left:24.5px;top:261px;font-size:11px;line-height:11px;color:#1a1a1a;font-weight:normal;">17-Jan</div>
<div class="t" style="left:106px;top:260px;font-size:12px;line-height:12px;color:#1a1a1a;font-weight:normal;">Dad</div>
<div class="t" style="left:171px;top:260px;font-size:12px;line-height:12px;color:#1a1a1a;font-weight:normal;">Sports</div>
<div class="t" style="right:601.5px;top:261px;font-size:11px;line-height:11px;color:#1a1a1a;font-weight:normal;">$20</div>
<div class="t" style="left:24.5px;top:279px;font-size:11px;line-height:11px;color:#1a1a1a;font-weight:normal;">21-Jan</div>
<div class="t" style="left:106px;top:278px;font-size:12px;line-height:12px;color:#1a1a1a;font-weight:normal;">Kelly</div>
<div class="t" style="left:171px;top:278px;font-size:12px;line-height:12px;color:#1a1a1a;font-weight:normal;">Books</div>
<div class="t" style="right:601.5px;top:279px;font-size:11px;line-height:11px;color:#1a1a1a;font-weight:normal;">$125</div>
<div class="t" style="left:24.5px;top:297px;font-size:11px;line-height:11px;color:#1a1a1a;font-weight:normal;">02-Feb</div>
<div class="t" style="left:106px;top:296px;font-size:12px;line-height:12px;color:#1a1a1a;font-weight:normal;">Mom</div>
<div class="t" style="left:171px;top:296px;font-size:12px;line-height:12px;color:#1a1a1a;font-weight:normal;">Food</div>
<div class="t" style="right:601.5px;top:297px;font-size:11px;line-height:11px;color:#1a1a1a;font-weight:normal;">$235</div>
<div class="t" style="left:24.5px;top:315px;font-size:11px;line-height:11px;color:#1a1a1a;font-weight:normal;">20-Feb</div>
<div class="t" style="left:106px;top:314px;font-size:12px;line-height:12px;color:#1a1a1a;font-weight:normal;">Kelly</div>
<div class="t" style="left:171px;top:314px;font-size:12px;line-height:12px;color:#1a1a1a;font-weight:normal;">Music</div>
<div class="t" style="right:601.5px;top:315px;font-size:11px;line-height:11px;color:#1a1a1a;font-weight:normal;">$20</div>
<div class="t" style="left:24.5px;top:333px;font-size:11px;line-height:11px;color:#1a1a1a;font-weight:normal;">25-Feb</div>
<div class="t" style="left:106px;top:332px;font-size:12px;line-height:12px;color:#1a1a1a;font-weight:normal;">Kelly</div>
<div class="t" style="left:171px;top:332px;font-size:12px;line-height:12px;color:#1a1a1a;font-weight:normal;">Tickets</div>
<div class="t" style="right:601.5px;top:333px;font-size:11px;line-height:11px;color:#1a1a1a;font-weight:normal;">$125</div>
<div class="r" style="left:389px;top:220px;width:176px;height:18px;background:#dce6f1;"></div>
<div class="r" style="left:389px;top:238px;width:176px;height:216px;background:#ffffff;"></div>
<div class="r" style="left:389px;top:238px;width:176px;height:1px;background:#a6bde3;"></div>
<div class="r" style="left:389px;top:454px;width:176px;height:18px;background:#dce6f1;"></div>
<div class="r" style="left:389px;top:454px;width:176px;height:1px;background:#a6bde3;"></div>
<div class="t" style="left:391.5px;top:225px;font-size:11px;line-height:11px;color:#000;font-weight:bold;">Row Labels</div>
<div class="t" style="left:474px;top:225px;font-size:11.5px;line-height:11.5px;color:#000;font-weight:bold;">Sum of Amount</div>
<svg class="r" style="left:393px;top:243px;" width="8" height="8" viewBox="0 0 8 8"><rect x="0.5" y="0.5" width="7" height="7" fill="#f0f0f0" stroke="#9a9a9a"/><rect x="2" y="3.5" width="4" height="1" fill="#555"/></svg>
<div class="t" style="left:403.5px;top:243px;font-size:11px;line-height:11px;color:#000;font-weight:bold;">Books</div>
<div class="t" style="right:368px;top:243px;font-size:11px;line-height:11px;color:#000;font-weight:bold;">125</div>
<div class="r" style="left:389px;top:256px;width:176px;height:1px;background:#a6bde3;"></div>
<div class="t" style="left:414.5px;top:260px;font-size:12px;line-height:12px;color:#1a1a1a;font-weight:normal;">Kelly</div>
<div class="t" style="right:368px;top:261px;font-size:11px;line-height:11px;color:#1a1a1a;font-weight:normal;">125</div>
<svg class="r" style="left:393px;top:279px;" width="8" height="8" viewBox="0 0 8 8"><rect x="0.5" y="0.5" width="7" height="7" fill="#f0f0f0" stroke="#9a9a9a"/><rect x="2" y="3.5" width="4" height="1" fill="#555"/></svg>
<div class="t" style="left:403.5px;top:279px;font-size:11px;line-height:11px;color:#000;font-weight:bold;">Food</div>
<div class="t" style="right:368px;top:279px;font-size:11px;line-height:11px;color:#000;font-weight:bold;">470</div>
<div class="r" style="left:389px;top:292px;width:176px;height:1px;background:#a6bde3;"></div>
<div class="t" style="left:414.5px;top:296px;font-size:12px;line-height:12px;color:#1a1a1a;font-weight:normal;">Mom</div>
<div class="t" style="right:368px;top:297px;font-size:11px;line-height:11px;color:#1a1a1a;font-weight:normal;">470</div>
<svg class="r" style="left:393px;top:315px;" width="8" height="8" viewBox="0 0 8 8"><rect x="0.5" y="0.5" width="7" height="7" fill="#f0f0f0" stroke="#9a9a9a"/><rect x="2" y="3.5" width="4" height="1" fill="#555"/></svg>
<div class="t" style="left:403.5px;top:315px;font-size:11px;line-height:11px;color:#000;font-weight:bold;">Fuel</div>
<div class="t" style="right:368px;top:315px;font-size:11px;line-height:11px;color:#000;font-weight:bold;">74</div>
<div class="r" style="left:389px;top:328px;width:176px;height:1px;background:#a6bde3;"></div>
<div class="t" style="left:414.5px;top:332px;font-size:12px;line-height:12px;color:#1a1a1a;font-weight:normal;">Mom</div>
<div class="t" style="right:368px;top:333px;font-size:11px;line-height:11px;color:#1a1a1a;font-weight:normal;">74</div>
<svg class="r" style="left:393px;top:351px;" width="8" height="8" viewBox="0 0 8 8"><rect x="0.5" y="0.5" width="7" height="7" fill="#f0f0f0" stroke="#9a9a9a"/><rect x="2" y="3.5" width="4" height="1" fill="#555"/></svg>
<div class="t" style="left:403.5px;top:351px;font-size:11px;line-height:11px;color:#000;font-weight:bold;">Music</div>
<div class="t" style="right:368px;top:351px;font-size:11px;line-height:11px;color:#000;font-weight:bold;">20</div>
<div class="r" style="left:389px;top:364px;width:176px;height:1px;background:#a6bde3;"></div>
<div class="t" style="left:414.5px;top:368px;font-size:12px;line-height:12px;color:#1a1a1a;font-weight:normal;">Kelly</div>
<div class="t" style="right:368px;top:369px;font-size:11px;line-height:11px;color:#1a1a1a;font-weight:normal;">20</div>
<svg class="r" style="left:393px;top:387px;" width="8" height="8" viewBox="0 0 8 8"><rect x="0.5" y="0.5" width="7" height="7" fill="#f0f0f0" stroke="#9a9a9a"/><rect x="2" y="3.5" width="4" height="1" fill="#555"/></svg>
<div class="t" style="left:403.5px;top:387px;font-size:11px;line-height:11px;color:#000;font-weight:bold;">Sports</div>
<div class="t" style="right:368px;top:387px;font-size:11px;line-height:11px;color:#000;font-weight:bold;">20</div>
<div class="r" style="left:389px;top:400px;width:176px;height:1px;background:#a6bde3;"></div>
<div class="t" style="left:414.5px;top:404px;font-size:12px;line-height:12px;color:#1a1a1a;font-weight:normal;">Dad</div>
<div class="t" style="right:368px;top:405px;font-size:11px;line-height:11px;color:#1a1a1a;font-weight:normal;">20</div>
<svg class="r" style="left:393px;top:423px;" width="8" height="8" viewBox="0 0 8 8"><rect x="0.5" y="0.5" width="7" height="7" fill="#f0f0f0" stroke="#9a9a9a"/><rect x="2" y="3.5" width="4" height="1" fill="#555"/></svg>
<div class="t" style="left:403.5px;top:423px;font-size:11px;line-height:11px;color:#000;font-weight:bold;">Tickets</div>
<div class="t" style="right:368px;top:423px;font-size:11px;line-height:11px;color:#000;font-weight:bold;">125</div>
<div class="r" style="left:389px;top:436px;width:176px;height:1px;background:#a6bde3;"></div>
<div class="t" style="left:414.5px;top:440px;font-size:12px;line-height:12px;color:#1a1a1a;font-weight:normal;">Kelly</div>
<div class="t" style="right:368px;top:441px;font-size:11px;line-height:11px;color:#1a1a1a;font-weight:normal;">125</div>
<div class="t" style="left:392px;top:459px;font-size:11.5px;line-height:11.5px;color:#000;font-weight:bold;">Grand Total</div>
<div class="t" style="right:368px;top:459px;font-size:11px;line-height:11px;color:#000;font-weight:bold;">834</div>
<div class="r" style="left:456px;top:221px;width:15px;height:16px;background:#f4f6f9;border:1px solid #c8c8c8"></div>
<svg class="r" style="left:460.5px;top:228px;" width="6" height="3.5" viewBox="0 0 6 3.5"><path d="M0 0 H6 L3 3.2Z" fill="#707070"/></svg>
<div class="r" style="left:388px;top:219px;width:85px;height:20px;background:transparent;border:2px solid #217346"></div>
<div class="r" style="left:469px;top:235px;width:6px;height:6px;background:#ffffff;"></div>
<div class="r" style="left:470px;top:236px;width:4px;height:4px;background:#217346;"></div>
<div class="r" style="left:677px;top:147px;width:20px;height:501px;background:#e6e6e6;"></div>
<div class="r" style="left:676px;top:166px;width:2px;height:482px;background:#cacaca;"></div>
<div class="r" style="left:680px;top:163px;width:13px;height:472px;background:#dcdcdc;"></div>
<div class="r" style="left:680px;top:149px;width:14px;height:14px;background:#fff;border:1px solid #c6c6c6"></div>
<svg class="r" style="left:683px;top:154px;" width="8" height="4" viewBox="0 0 8 4"><path d="M0 4 L4 0 L8 4Z" fill="#666"/></svg>
<div class="r" style="left:680px;top:226px;width:14px;height:409px;background:#fff;border:1px solid #c6c6c6"></div>
<div class="r" style="left:680px;top:635px;width:14px;height:13px;background:#fff;border:1px solid #c6c6c6"></div>
<svg class="r" style="left:683px;top:639px;" width="8" height="4" viewBox="0 0 8 4"><path d="M0 0 L8 0 L4 4Z" fill="#666"/></svg>
<div class="r" style="left:696px;top:147px;width:1px;height:508px;background:#c6c6c6;"></div>
<div class="r" style="left:0px;top:648px;width:677px;height:7px;background:#e6e6e6;"></div>
<div class="r" style="left:0px;top:648px;width:148px;height:1px;background:#ababab;"></div>
<div class="r" style="left:90px;top:649px;width:1px;height:6px;background:#ababab;"></div>
<div class="r" style="left:148px;top:648px;width:58px;height:7px;background:#ffffff;"></div>
<div class="r" style="left:206px;top:648px;width:471px;height:1px;background:#ababab;"></div>
<div class="r" style="left:263px;top:649px;width:1px;height:6px;background:#ababab;"></div>
<svg class="r" style="left:293px;top:650px;" width="14" height="6" viewBox="0 0 14 6"><circle cx="7" cy="7" r="5.5" fill="none" stroke="#888" stroke-width="1.2"/></svg>
<div class="r" style="left:697px;top:147px;width:234px;height:508px;background:#e6e6e6;"></div>
<div class="t" style="left:709.5px;top:163.06px;font-size:18px;line-height:18px;color:#3a8a5c;font-weight:normal;letter-spacing:0.15px;">PivotTable Fields</div>
<svg class="r" style="left:868px;top:166px;" width="8" height="5" viewBox="0 0 8 5"><path d="M0 0 H8 L4 4.5Z" fill="#666"/></svg>
<svg class="r" style="left:905px;top:164.5px;" width="9" height="8.5" viewBox="0 0 9 8.5"><path d="M0.7 0.7 L8.3 7.8 M8.3 0.7 L0.7 7.8" stroke="#555" stroke-width="1.6"/></svg>
<div class="t" style="left:709px;top:197.24px;font-size:10.7px;line-height:10.7px;color:#444444;font-weight:normal;">Choose fields to add to report:</div>
<div class="r" style="left:879px;top:190px;width:40px;height:24px;background:#fff;border:1px solid #c6c6c6"></div>
<svg class="r" style="left:887px;top:194px;" width="14" height="14" viewBox="0 0 14 14"><g transform="translate(7,7)" fill="#8a8a8a"><circle r="4.4"/><rect x="-1.6" y="-6.2" width="3.2" height="3" transform="rotate(0)"/><rect x="-1.6" y="-6.2" width="3.2" height="3" transform="rotate(45)"/><rect x="-1.6" y="-6.2" width="3.2" height="3" transform="rotate(90)"/><rect x="-1.6" y="-6.2" width="3.2" height="3" transform="rotate(135)"/><rect x="-1.6" y="-6.2" width="3.2" height="3" transform="rotate(180)"/><rect x="-1.6" y="-6.2" width="3.2" height="3" transform="rotate(225)"/><rect x="-1.6" y="-6.2" width="3.2" height="3" transform="rotate(270)"/><rect x="-1.6" y="-6.2" width="3.2" height="3" transform="rotate(315)"/><circle r="1.9" fill="#fff"/></g></svg>
<svg class="r" style="left:908px;top:200px;" width="6" height="3.5" viewBox="0 0 6 3.5"><path d="M0 0 H6 L3 3.2Z" fill="#666"/></svg>
<div class="r" style="left:708px;top:226px;width:211px;height:18px;background:#fff;border:1px solid #b9b9b9"></div>
<div class="t" style="left:710px;top:229.33px;font-size:10.6px;line-height:10.6px;color:#666;font-weight:normal;">Search</div>
<svg class="r" style="left:904px;top:228px;" width="13" height="13" viewBox="0 0 13 13"><circle cx="8" cy="5" r="3.6" fill="none" stroke="#3f7fc4" stroke-width="1.6"/><path d="M5.6 7.6 L1.5 11.5" stroke="#3f7fc4" stroke-width="2" stroke-linecap="round"/></svg>
<div class="r" style="left:708px;top:258px;width:211px;height:152px;background:#ffffff;"></div>
<svg class="r" style="left:710px;top:260px;" width="11" height="11" viewBox="0 0 11 11"><rect x="0.5" y="0.5" width="10" height="10" fill="#fff" stroke="#7a7a7a"/></svg>
<div class="t" style="left:727px;top:260.74px;font-size:10px;line-height:10px;color:#444444;font-weight:normal;">Date</div>
<svg class="r" style="left:710px;top:277px;" width="11" height="11" viewBox="0 0 11 11"><rect x="0.5" y="0.5" width="10" height="10" fill="#fff" stroke="#7a7a7a"/><path d="M2.3 5.5 L4.5 7.8 L8.8 2.8" fill="none" stroke="#555" stroke-width="1.1"/></svg>
<div class="t" style="left:727px;top:278.37px;font-size:10.2px;line-height:10.2px;color:#333;font-weight:bold;">Buyer</div>
<svg class="r" style="left:710px;top:294px;" width="11" height="11" viewBox="0 0 11 11"><rect x="0.5" y="0.5" width="10" height="10" fill="#fff" stroke="#7a7a7a"/><path d="M2.3 5.5 L4.5 7.8 L8.8 2.8" fill="none" stroke="#555" stroke-width="1.1"/></svg>
<div class="t" style="left:727px;top:295.37px;font-size:10.2px;line-height:10.2px;color:#333;font-weight:bold;">Type</div>
<svg class="r" style="left:710px;top:311px;" width="11" height="11" viewBox="0 0 11 11"><rect x="0.5" y="0.5" width="10" height="10" fill="#fff" stroke="#7a7a7a"/><path d="M2.3 5.5 L4.5 7.8 L8.8 2.8" fill="none" stroke="#555" stroke-width="1.1"/></svg>
<div class="t" style="left:727px;top:312.17px;font-size:10.2px;line-height:10.2px;color:#333;font-weight:bold;">Amount</div>
<div class="t" style="left:710px;top:335.11px;font-size:10.5px;line-height:10.5px;color:#444444;font-weight:normal;">More Tables...</div>
<svg class="r" style="left:708px;top:424px;" width="211" height="1" viewBox="0 0 211 1"><path d="M0 0.5 H211" stroke="#c6c6c6" stroke-dasharray="1 2"/></svg>
<div class="t" style="left:712px;top:431.28px;font-size:10.3px;line-height:10.3px;color:#444444;font-weight:normal;">Drag fields between areas below:</div>
<div class="r" style="left:711px;top:457px;width:1px;height:170px;background:#cfcfcf;"></div>
<svg class="r" style="left:714.5px;top:459px;" width="11" height="10" viewBox="0 0 11 10"><path d="M0 0 H11 L7 4.5 V10 H4 V4.5Z" fill="#8a8a8a"/></svg>
<div class="t" style="left:733px;top:460.64px;font-size:10px;line-height:10px;color:#444444;font-weight:normal;">Filters</div>
<div class="r" style="left:712px;top:475px;width:98px;height:61px;background:#fff;"></div>
<svg class="r" style="left:820.5px;top:460.5px;" width="10" height="8.5" viewBox="0 0 10 8.5"><rect x="0" y="0" width="2" height="8.5" fill="#9a9a9a"/><rect x="3" y="0" width="2" height="8.5" fill="#9a9a9a"/><rect x="6" y="0" width="3.5" height="8.5" fill="#b8b8b8"/></svg>
<div class="t" style="left:838px;top:460.31px;font-size:10.5px;line-height:10.5px;color:#444444;font-weight:normal;">Columns</div>
<div class="r" style="left:817px;top:475px;width:102px;height:61px;background:#fff;"></div>
<div class="r" style="left:712px;top:541px;width:208px;height:1px;background:#c8c8c8;"></div>
<svg class="r" style="left:716.5px;top:550.5px;" width="9" height="8" viewBox="0 0 9 8"><rect x="0" y="0" width="9" height="2" fill="#9a9a9a"/><rect x="0" y="3" width="9" height="2" fill="#9a9a9a"/><rect x="0" y="6" width="9" height="2" fill="#b8b8b8"/></svg>
<div class="t" style="left:732.5px;top:550.31px;font-size:10.5px;line-height:10.5px;color:#444444;font-weight:normal;">Rows</div>
<div class="t" style="left:822px;top:549.69px;font-size:11px;line-height:11px;color:#777;font-weight:normal;">Σ</div>
<div class="t" style="left:838px;top:549.91px;font-size:10.5px;line-height:10.5px;color:#444444;font-weight:normal;">Values</div>
<div class="r" style="left:712px;top:566px;width:98px;height:60px;background:#fff;"></div>
<div class="r" style="left:817px;top:566px;width:102px;height:60px;background:#fff;"></div>
<div class="r" style="left:713px;top:567px;width:96px;height:17px;background:#fff;border:1px solid #c6c6c6"></div>
<div class="t" style="left:719.5px;top:570.91px;font-size:10.5px;line-height:10.5px;color:#444444;font-weight:normal;">Type</div>
<svg class="r" style="left:793px;top:574px;" width="7" height="4" viewBox="0 0 7 4"><path d="M0 0 H7 L3.5 3.5Z" fill="#555"/></svg>
<div class="r" style="left:713px;top:586px;width:96px;height:17px;background:#fff;border:1px solid #c6c6c6"></div>
<div class="t" style="left:719.5px;top:589.91px;font-size:10.5px;line-height:10.5px;color:#444444;font-weight:normal;">Buyer</div>
<svg class="r" style="left:793px;top:593px;" width="7" height="4" viewBox="0 0 7 4"><path d="M0 0 H7 L3.5 3.5Z" fill="#555"/></svg>
<div class="r" style="left:818px;top:567px;width:101px;height:17px;background:#fff;border:1px solid #c6c6c6"></div>
<div class="t" style="left:824px;top:570.91px;font-size:10.5px;line-height:10.5px;color:#444444;font-weight:normal;">Sum of Amou...</div>
<svg class="r" style="left:902.5px;top:574px;" width="7" height="4" viewBox="0 0 7 4"><path d="M0 0 H7 L3.5 3.5Z" fill="#555"/></svg>
<svg class="r" style="left:711.5px;top:648px;" width="11" height="11" viewBox="0 0 11 11"><rect x="0.5" y="0.5" width="10" height="10" fill="#fff" stroke="#7a7a7a"/></svg>
<div class="t" style="left:728px;top:649.11px;font-size:10.5px;line-height:10.5px;color:#444444;font-weight:normal;">Defer Layout Update</div>
<div class="r" style="left:877px;top:644px;width:42px;height:20px;background:#f6f6f6;border:1px solid #ececec"></div>
<div class="t" style="left:747.5px;width:300px;text-align:center;top:648.11px;font-size:10.5px;line-height:10.5px;color:#b0b0b0;font-weight:normal;">Update</div>
</body></html>
